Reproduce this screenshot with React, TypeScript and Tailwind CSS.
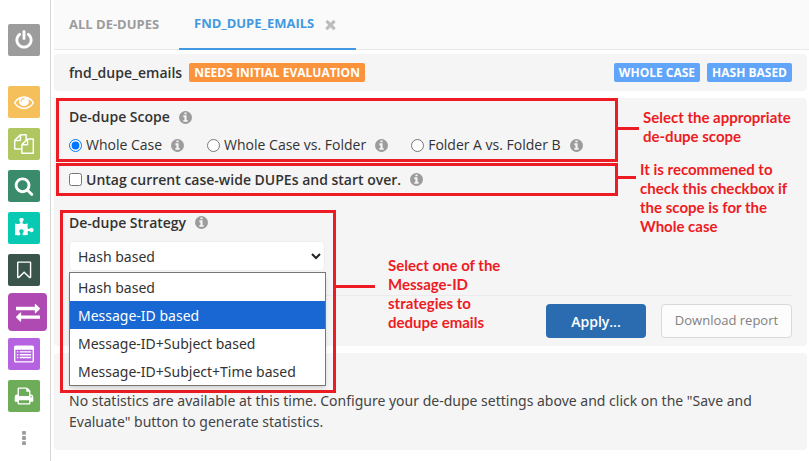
import { useState } from "react"
import type { ReactNode } from "react"

const icons = {
  power: "M1664 896q0 156-61 298t-164 245-245 164-298 61-298-61-245-164-164-245-61-298q0-182 80.5-343t226.5-270q43-32 95.5-25t83.5 50q32 42 24.5 94.5t-49.5 84.5q-98 74-151.5 181t-53.5 228q0 104 40.5 198.5t109.5 163.5 163.5 109.5 198.5 40.5 198.5-40.5 163.5-109.5 109.5-163.5 40.5-198.5q0-121-53.5-228t-151.5-181q-42-32-49.5-84.5t24.5-94.5q31-43 84-50t95 25q146 109 226.5 270t80.5 343zm-640-768v640q0 52-38 90t-90 38-90-38-38-90v-640q0-52 38-90t90-38 90 38 38 90z",
  eye: "M1664 960q-152-236-381-353 61 104 61 225 0 185-131.5 316.5t-316.5 131.5-316.5-131.5-131.5-316.5q0-121 61-225-229 117-381 353 133 205 333.5 326.5t434.5 121.5 434.5-121.5 333.5-326.5zm-720-384q0-20-14-34t-34-14q-125 0-214.5 89.5t-89.5 214.5q0 20 14 34t34 14 34-14 14-34q0-86 61-147t147-61q20 0 34-14t14-34zm848 384q0 34-20 69-140 230-376.5 368.5t-499.5 138.5-499.5-139-376.5-368q-20-35-20-69t20-69q140-229 376.5-368t499.5-139 499.5 139 376.5 368q20 35 20 69z",
  files: "M1696 384q40 0 68 28t28 68v1216q0 40-28 68t-68 28h-960q-40 0-68-28t-28-68v-288h-544q-40 0-68-28t-28-68v-672q0-40 20-88t48-76l408-408q28-28 76-48t88-20h416q40 0 68 28t28 68v328q68-40 128-40h416zm-544 213l-299 299h299v-299zm-640-384l-299 299h299v-299zm196 647l316-316v-416h-384v416q0 40-28 68t-68 28h-416v640h512v-256q0-40 20-88t48-76zm956 804v-1152h-384v416q0 40-28 68t-68 28h-416v640h896z",
  search: "M1216 832q0-185-131.5-316.5t-316.5-131.5-316.5 131.5-131.5 316.5 131.5 316.5 316.5 131.5 316.5-131.5 131.5-316.5zm512 832q0 52-38 90t-90 38q-54 0-90-38l-343-342q-179 124-399 124-143 0-273.5-55.5t-225-150-150-225-55.5-273.5 55.5-273.5 150-225 225-150 273.5-55.5 273.5 55.5 225 150 150 225 55.5 273.5q0 220-124 399l343 343q37 37 37 90z",
  puzzle: "M1755 1083q0 81-44.5 135t-123.5 54q-41 0-77.5-17.5t-59-38-56.5-38-71-17.5q-110 0-110 124 0 39 16 115t15 115v5q-22 0-33 1-34 3-97.5 11.5t-115.5 13.5-98 5q-61 0-103-26.5t-42-83.5q0-37 17.5-71t38-56.5 38-59 17.5-77.5q0-79-54-123.5t-135-44.5q-84 0-143 45.5t-59 127.5q0 43 15 83t33.5 64.5 33.5 53 15 50.5q0 45-46 89-37 35-117 35-95 0-245-24-9-2-27.5-4t-27.5-4l-13-2q-1 0-3-1-2 0-2-1v-1024q2 1 17.5 3.5t34 5 21.5 3.5q150 24 245 24 80 0 117-35 46-44 46-89 0-22-15-50.5t-33.5-53-33.5-64.5-15-83q0-82 59-127.5t144-45.5q80 0 134 44.5t54 123.5q0 41-17.5 77.5t-38 59-38 56.5-17.5 71q0 57 42 83.5t103 26.5q64 0 180-15t163-17v2q-1 2-3.5 17.5t-5 34-3.5 21.5q-24 150-24 245 0 80 35 117 44 46 89 46 22 0 50.5-15t53-33.5 64.5-33.5 83-15q82 0 127.5 59t45.5 143z",
  bookmark: "M1420 256h-1024v1242l423-406 89-85 89 85 423 406v-1242zm12-128q23 0 44 9 33 13 52.5 41t19.5 62v1289q0 34-19.5 62t-52.5 41q-19 8-44 8-48 0-83-32l-441-424-441 424q-36 33-83 33-23 0-44-9-33-13-52.5-41t-19.5-62v-1289q0-34 19.5-62t52.5-41q21-9 44-9h1048z",
  exchange: "M1792 1184v192q0 13-9.5 22.5t-22.5 9.5h-1376v192q0 13-9.5 22.5t-22.5 9.5q-12 0-24-10l-319-320q-9-9-9-22 0-14 9-23l320-320q9-9 23-9 13 0 22.5 9.5t9.5 22.5v192h1376q13 0 22.5 9.5t9.5 22.5zm0-544q0 14-9 23l-320 320q-9 9-23 9-13 0-22.5-9.5t-9.5-22.5v-192h-1376q-13 0-22.5-9.5t-9.5-22.5v-192q0-13 9.5-22.5t22.5-9.5h1376v-192q0-14 9-23t23-9q12 0 24 10l319 319q9 9 9 23z",
  list: "M160 128h1472q66 0 113 47t47 113v1216q0 66-47 113t-113 47h-1472q-66 0-113-47t-47-113v-1216q0-66 47-113t113-47zm-32 384v992q0 32 32 32h1472q32 0 32-32v-992zm128 128h128v128h-128zm256 0h1024v128h-1024zm-256 256h128v128h-128zm256 0h1024v128h-1024zm-256 256h128v128h-128zm256 0h1024v128h-1024z",
  print: "M448 1536h896v-256h-896v256zm0-640h896v-384h-160q-40 0-68-28t-28-68v-160h-640v640zm1152 64q0-26-19-45t-45-19-45 19-19 45 19 45 45 19 45-19 19-45zm128 0v416q0 13-9.5 22.5t-22.5 9.5h-224v160q0 40-28 68t-68 28h-960q-40 0-68-28t-28-68v-160h-224q-13 0-22.5-9.5t-9.5-22.5v-416q0-79 56.5-135.5t135.5-56.5h64v-544q0-40 28-68t68-28h672q40 0 88 20t76 48l152 152q28 28 48 76t20 88v256h64q79 0 135.5 56.5t56.5 135.5z",
  more: "M800 192h192q96 0 96 96v192q0 96-96 96h-192q-96 0-96-96v-192q0-96 96-96zm0 512h192q96 0 96 96v192q0 96-96 96h-192q-96 0-96-96v-192q0-96 96-96zm0 512h192q96 0 96 96v192q0 96-96 96h-192q-96 0-96-96v-192q0-96 96-96z",
  info: "M1152 1376v-160q0-14-9-23t-23-9h-96v-512q0-14-9-23t-23-9h-320q-14 0-23 9t-9 23v160q0 14 9 23t23 9h96v320h-96q-14 0-23 9t-9 23v160q0 14 9 23t23 9h448q14 0 23-9t9-23zm-128-896v-160q0-14-9-23t-23-9h-192q-14 0-23 9t-9 23v160q0 14 9 23t23 9h192q14 0 23-9t9-23zm640 416q0 209-103 385.5t-279.5 279.5-385.5 103-385.5-103-279.5-279.5-103-385.5 103-385.5 279.5-279.5 385.5-103 385.5 103 279.5 279.5 103 385.5z",
  close: "M1490 1322q0 40-28 68l-136 136q-28 28-68 28t-68-28l-294-294-294 294q-28 28-68 28t-68-28l-136-136q-28-28-28-68t28-68l294-294-294-294q-28-28-28-68t28-68l136-136q28-28 68-28t68 28l294 294 294-294q28-28 68-28t68 28l136 136q28 28 28 68t-28 68l-294 294 294 294q28 28 28 68z",
}

const strategies = [
  "Hash based",
  "Message-ID based",
  "Message-ID+Subject based",
  "Message-ID+Subject+Time based",
]

const scopes = ["Whole Case", "Whole Case vs. Folder", "Folder A vs. Folder B"]

function Icon({ name, className }: { name: keyof typeof icons; className: string }) {
  return (
    <svg viewBox="0 0 1792 1792" fill="currentColor" fillRule="evenodd" aria-hidden="true" className={`shrink-0 ${className}`}>
      <path d={icons[name]} />
    </svg>
  )
}

function Info() {
  return <Icon name="info" className="size-[15px] text-[#9c9c9c]" />
}

function SideButton({ icon, label, color }: { icon: keyof typeof icons; label: string; color: string }) {
  return (
    <button type="button" aria-label={label} className={`flex size-8 items-center justify-center rounded-xs text-white ${color}`}>
      <Icon name={icon} className="size-5" />
    </button>
  )
}

function Badge({ color, children }: { color: string; children: ReactNode }) {
  return <span className={`rounded-xs px-[5px] text-[12px] leading-[19px] font-bold text-white ${color}`}>{children}</span>
}

// Red note joined to its box by a short line
function Note({ className, line, children }: { className: string; line: string; children: ReactNode }) {
  return (
    <div className={`absolute left-full ml-[3px] flex font-[Lato,sans-serif] text-[15px] leading-[19px] font-bold text-[#ed1c24] ${className}`}>
      <span className={`h-[3px] shrink-0 bg-[#ed1c24] ${line}`} />
      {children}
    </div>
  )
}

export default function App() {
  const [scope, setScope] = useState(scopes[0])
  const [untag, setUntag] = useState(false)
  const [strategy, setStrategy] = useState(strategies[0])
  const [active, setActive] = useState(strategies[1])

  return (
    <div className="flex min-h-screen bg-white font-['Open_Sans',sans-serif] text-[14px] text-[#333]">
      <nav className="flex w-[51px] shrink-0 flex-col items-start gap-[10px] border-r border-[#d6d6d6] pt-6 pl-2">
        <div className="mb-5">
          <SideButton icon="power" label="Log out" color="bg-[#9c9c9c]" />
        </div>
        <SideButton icon="eye" label="View" color="bg-[#f5bf5b]" />
        <SideButton icon="files" label="Documents" color="bg-[#afc661]" />
        <SideButton icon="search" label="Search" color="bg-[#3a8a6c]" />
        <SideButton icon="puzzle" label="Plugins" color="bg-[#08c9b1]" />
        <SideButton icon="bookmark" label="Bookmarks" color="bg-[#3b544b]" />
        <button type="button" aria-label="De-dupe" className="-my-[3px] flex h-[38px] w-[39px] items-center justify-center rounded-sm bg-[#b04ab3] text-white">
          <Icon name="exchange" className="size-6" />
        </button>
        <SideButton icon="list" label="Reports" color="bg-[#b563e0]" />
        <SideButton icon="print" label="Print" color="bg-[#6dac58]" />
        <button type="button" aria-label="More" className="flex h-7 w-8 items-center justify-center pt-1 text-[#9c9c9c]">
          <Icon name="more" className="size-[18px]" />
        </button>
      </nav>

      <main className="min-w-0 flex-1 pr-[2px] pl-[3px]">
        <div role="tablist" className="-mr-[2px] mb-1 flex h-[50px] border-b border-[#e8e8e8] bg-[#fafafa] text-[13px] font-bold">
          <button type="button" role="tab" aria-selected="false" className="h-[50px] w-[125px] pl-[15px] text-left text-[#9c9c9c]">
            ALL DE-DUPES
          </button>
          <div className="flex h-[50px] items-center gap-[9px] border-b-2 border-[#4299e1] pr-[18px] pl-[15px] text-[#4299e1]">
            <button type="button" role="tab" aria-selected="true">FND_DUPE_EMAILS</button>
            <button type="button" aria-label="Close tab" className="text-[#bdbdbd]">
              <Icon name="close" className="size-[15px]" />
            </button>
          </div>
        </div>

        <header className="mb-[7px] flex h-[37px] items-center gap-[7px] rounded-sm bg-[#f5f5f5] px-[15px]">
          <h1 className="text-[14px] font-semibold">fnd_dupe_emails</h1>
          <Badge color="bg-[#fb923c]">NEEDS INITIAL EVALUATION</Badge>
          <div className="ml-auto flex gap-[7px]">
            <Badge color="bg-[#60a5fa]">WHOLE CASE</Badge>
            <Badge color="bg-[#60a5fa]">HASH BASED</Badge>
          </div>
        </header>

        <section className="mb-[7px] rounded-sm bg-[#f5f5f5]">
          <div className="mr-[189px] ml-[2px]">
            <fieldset className="relative h-16 border-3 border-[#ed1c24] px-[10px] pt-[6px]">
              <div className="flex items-center gap-2 leading-5 font-semibold">
                De-dupe Scope <Info />
              </div>
              <div className="mt-2 flex gap-[22px] leading-5">
                {scopes.map(item => (
                  <div key={item} className="flex items-center gap-2">
                    <label className="flex items-center gap-1 whitespace-nowrap">
                      <input
                        type="radio"
                        name="scope"
                        className="size-[13px]"
                        checked={scope === item}
                        onChange={() => setScope(item)}
                      />
                      {item}
                    </label>
                    <Info />
                  </div>
                ))}
              </div>
              <Note className="top-[7px] w-[184px]" line="mt-[19px] mr-1 w-[21px]">
                <p>Select the appropriate de-dupe scope</p>
              </Note>
            </fieldset>

            <div className="relative mt-px flex h-[33px] items-center gap-2 border-3 border-[#ed1c24] px-[10px]">
              <label className="flex items-center gap-1 font-semibold">
                <input
                  type="checkbox"
                  className="size-[13px]"
                  checked={untag}
                  onChange={event => setUntag(event.target.checked)}
                />
                Untag current case-wide DUPEs and start over.
              </label>
              <Info />
              <Note className="-top-[6px] w-[184px]" line="mt-[16px] mr-1 w-[18px]">
                <p>It is recommened to check this checkbox if the scope is for the Whole case</p>
              </Note>
            </div>
          </div>

          <div className="mx-[6px] mt-[14px] h-[85px]">
            <div className="relative z-10 h-[183px] w-[276px] border-3 border-[#ed1c24] pr-2 pl-[6px]">
              <label htmlFor="strategy" className="flex h-[19px] items-center gap-2 font-semibold">
                De-dupe Strategy <Info />
              </label>
              <div className="relative mt-[9px] font-['Noto_Sans',sans-serif]">
                <select
                  id="strategy"
                  value={strategy}
                  onChange={event => setStrategy(event.target.value)}
                  className="block h-[30px] w-full appearance-none rounded-sm border border-[#eee] bg-white pl-2"
                >
                  {strategies.map(item => <option key={item}>{item}</option>)}
                </select>
                <svg viewBox="0 0 10 7" className="pointer-events-none absolute top-[12px] right-1 h-[7px] w-[10px]" fill="none" stroke="#222" strokeWidth="2">
                  <path d="M1 1l4 4 4-4" />
                </svg>
              </div>
              <div role="listbox" aria-label="De-dupe Strategy" className="mt-px -mr-px border border-[#767676] bg-white font-['Noto_Sans',sans-serif] shadow-md">
                {strategies.map(item => (
                  <button
                    key={item}
                    type="button"
                    role="option"
                    aria-selected={item === active}
                    onMouseEnter={() => setActive(item)}
                    onClick={() => setStrategy(item)}
                    className={`block h-7 w-full pl-2 text-left ${item === active ? "bg-[#1967d2] text-white" : ""}`}
                  >
                    {item}
                  </button>
                ))}
              </div>
              <Note className="top-[43px] w-[180px]" line="mt-[29px] mr-[13px] w-[39px]">
                <p>Select one of the Message-ID strategies to dedupe emails</p>
              </Note>
            </div>
          </div>

          <div className="mx-[15px] flex h-[51px] items-center justify-end gap-[15px] border-t border-[#ebebeb]">
            <button type="button" className="h-[34px] w-[100px] rounded-sm bg-[#2b6cb0] font-semibold text-white">
              Apply...
            </button>
            <button type="button" className="h-[34px] w-[131px] rounded-sm border border-[#d9d9d9] bg-[#fcfcfc] text-[13px] text-[#808080]">
              Download report
            </button>
          </div>
        </section>

        <section className="rounded-sm bg-[#f5f5f5] px-[15px] pt-[37px] pb-[18px]">
          <p className="font-['Noto_Sans',sans-serif] leading-[21px] text-[#444]">
            No statistics are available at this time. Configure your de-dupe settings above and click on the "Save and
            Evaluate" button to generate statistics.
          </p>
        </section>
      </main>
    </div>
  )
}
